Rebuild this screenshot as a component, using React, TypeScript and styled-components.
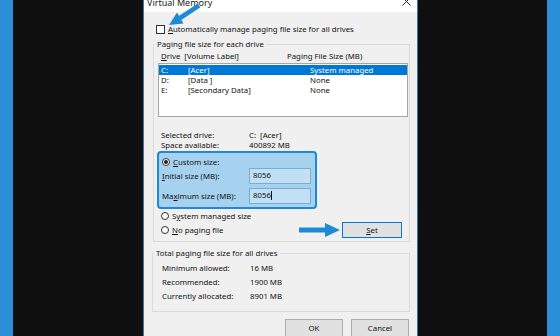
import React from 'react';
import styled, { createGlobalStyle } from 'styled-components';

const Global = createGlobalStyle`
  html, body { margin: 0; padding: 0; background: #0f0f0f; }
  body { width: 560px; height: 336px; overflow: hidden; font-family: "Noto Sans", "Open Sans", sans-serif; }
`;

const Page = styled.div`
  display: flex;
  width: 560px;
  height: 336px;
  overflow: hidden;
  background: #0f0f0f;
`;
const Strip = styled.div`
  width: 13px;
  flex: none;
  background: #2a8fd6;
`;
const Backdrop = styled.div<{ $w: number }>`
  width: ${p => p.$w}px;
  flex: none;
  background: #0f0f0f;
`;
const Dialog = styled.div`
  position: relative;
  width: 275px;
  flex: none;
  display: flex;
  flex-direction: column;
  box-sizing: border-box;
  background: #f0f0f0;
  border-left: 1px solid #3b78a8;
  border-right: 1px solid #3b78a8;
  font-size: 7.8px;
  color: #111;
`;
const TitleBar = styled.div`
  height: 12px;
  flex: none;
  background: #ffffff;
  display: flex;
  justify-content: space-between;
  align-items: flex-start;
  overflow: hidden;
`;
const TitleText = styled.div`
  margin-top: -3px;
  padding-left: 3px;
  font-size: 9px;
  line-height: 12px;
  color: #222;
`;
const CloseIcon = styled.svg`
  margin-top: -3px;
  margin-right: 6px;
`;
const Body = styled.div`
  display: flex;
  flex-direction: column;
  padding: 0 7px 0 9px;
`;
const CheckRow = styled.div`
  display: flex;
  align-items: center;
  gap: 3px;
  height: 10px;
  margin: 12px 0 0 3px;
  line-height: 10px;
`;
const CheckBox = styled.span`
  width: 9px;
  height: 9px;
  box-sizing: border-box;
  border: 1px solid #333;
  background: #fff;
  flex: none;
`;
const Group = styled.fieldset<{ $shift?: number }>`
  margin: ${p => p.$shift ?? 5}px 0 0 ${p => (p.$shift ? -1 : 0)}px;
  padding: ${p => (p.$shift ? '3px 1px 8px 4px' : '2px 1px 3px 4px')};
  border: 1px solid #dadada;
  min-width: 0;
  display: flex;
  flex-direction: column;
`;
const Legend = styled.legend`
  padding: 0 2px;
  margin-left: -3px;
  line-height: 10px;
`;
const HeaderRow = styled.div`
  display: grid;
  grid-template-columns: 126px 1fr;
  padding-left: 3px;
  line-height: 10px;
`;
const ListBox = styled.div`
  margin-top: 2px;
  height: 54px;
  box-sizing: border-box;
  border: 1px solid #a5a5a5;
  background: #fff;
  padding-top: 1px;
`;
const ListRow = styled.div<{ $sel?: boolean }>`
  display: grid;
  grid-template-columns: 27px 122px 1fr;
  padding-left: 2px;
  height: 10px;
  line-height: 10px;
  background: ${p => (p.$sel ? '#0078d7' : 'transparent')};
  color: ${p => (p.$sel ? '#fff' : '#111')};
`;
const InfoRow = styled.div<{ $first?: boolean }>`
  display: grid;
  grid-template-columns: 88px 1fr;
  padding-left: 3px;
  line-height: 10px;
  margin-top: ${p => (p.$first ? 13 : 0)}px;
`;
const Highlight = styled.div`
  margin: 1px 0 0 -1px;
  width: 160px;
  box-sizing: border-box;
  border: 2px solid #1d8ad6;
  border-radius: 4px;
  background: #a7d2ef;
  padding: 4px 4px 3px 3px;
  display: flex;
  flex-direction: column;
`;
const RadioRow = styled.div<{ $mt?: number; $pl?: number }>`
  display: flex;
  align-items: center;
  gap: 3px;
  height: 10px;
  line-height: 10px;
  margin-top: ${p => p.$mt ?? 0}px;
  padding-left: ${p => p.$pl ?? 0}px;
`;
const Radio = styled.span<{ $on?: boolean }>`
  width: 8px;
  height: 8px;
  box-sizing: border-box;
  border: 1px solid #333;
  border-radius: 50%;
  background: #fff;
  flex: none;
  display: flex;
  align-items: center;
  justify-content: center;
  &::after {
    content: '';
    width: 4px;
    height: 4px;
    border-radius: 50%;
    background: ${p => (p.$on ? '#222' : 'transparent')};
  }
`;
const SizeRow = styled.div<{ $mt?: number }>`
  display: flex;
  align-items: center;
  height: 17px;
  margin-top: ${p => p.$mt ?? 0}px;
`;
const SizeLabel = styled.span`
  width: 87px;
  flex: none;
`;
const SizeInput = styled.div`
  width: 62px;
  height: 16px;
  box-sizing: border-box;
  border: 1px solid #7eabcc;
  background: #c0e1f5;
  padding-left: 3px;
  line-height: 13px;
  display: flex;
  align-items: center;
`;
const Caret = styled.span`
  width: 1px;
  height: 9px;
  background: #111;
  display: inline-block;
`;
const ActionRow = styled.div`
  display: flex;
  align-items: center;
  height: 16px;
  margin-top: 1px;
  padding-left: 3px;
  line-height: 10px;
`;
const RadioLabel = styled.span`
  display: flex;
  align-items: center;
  gap: 3px;
`;
const ArrowRight = styled.svg`
  margin-left: auto;
  flex: none;
`;
const Button = styled.div<{ $focus?: boolean; $w?: number; $h?: number }>`
  width: ${p => p.$w ?? 58}px;
  height: ${p => p.$h ?? 20}px;
  flex: none;
  box-sizing: border-box;
  border: 1px solid ${p => (p.$focus ? '#0078d7' : '#adadad')};
  background: #e1e1e1;
  display: flex;
  align-items: center;
  justify-content: center;
  line-height: 10px;
`;
const SetButton = styled(Button)`
  margin: 0 6px 0 2px;
`;
const TotalRow = styled.div`
  display: grid;
  grid-template-columns: 88px 1fr;
  padding-left: 5px;
  line-height: 14px;
`;
const ButtonRow = styled.div`
  display: flex;
  justify-content: flex-end;
  gap: 8px;
  margin-top: 7px;
  padding-right: 1px;
`;
const ButtonText = styled.span`
  margin-top: -3px;
`;
const TopArrow = styled.svg`
  position: absolute;
  left: 19px;
  top: 0;
`;

export default function App() {
  return (
    <>
      <Global />
      <Page>
        <Strip />
        <Backdrop $w={130} />
        <Dialog>
          <TitleBar>
            <TitleText>Virtual Memory</TitleText>
            <CloseIcon width="9" height="9" viewBox="0 0 9 9">
              <path d="M0.5 0.5 L8.5 8.5 M8.5 0.5 L0.5 8.5" stroke="#222" strokeWidth="1" />
            </CloseIcon>
          </TitleBar>
          <Body>
            <CheckRow>
              <CheckBox />
              <span><u>A</u>utomatically manage paging file size for all drives</span>
            </CheckRow>
            <Group>
              <Legend>Paging file size for each drive</Legend>
              <HeaderRow>
                <span><u>D</u>rive&nbsp; [Volume Label]</span>
                <span>Paging File Size (MB)</span>
              </HeaderRow>
              <ListBox>
                <ListRow $sel>
                  <span>C:</span>
                  <span>[Acer]</span>
                  <span>System managed</span>
                </ListRow>
                <ListRow>
                  <span>D:</span>
                  <span>[Data ]</span>
                  <span>None</span>
                </ListRow>
                <ListRow>
                  <span>E:</span>
                  <span>[Secondary Data]</span>
                  <span>None</span>
                </ListRow>
              </ListBox>
              <InfoRow $first>
                <span>Selected drive:</span>
                <span>C:&nbsp; [Acer]</span>
              </InfoRow>
              <InfoRow>
                <span>Space available:</span>
                <span>400892 MB</span>
              </InfoRow>
              <Highlight>
                <RadioRow>
                  <Radio $on />
                  <span><u>C</u>ustom size:</span>
                </RadioRow>
                <SizeRow>
                  <SizeLabel><u>I</u>nitial size (MB):</SizeLabel>
                  <SizeInput>8056</SizeInput>
                </SizeRow>
                <SizeRow $mt={3}>
                  <SizeLabel>Ma<u>x</u>imum size (MB):</SizeLabel>
                  <SizeInput>8056<Caret /></SizeInput>
                </SizeRow>
              </Highlight>
              <RadioRow $mt={2} $pl={3}>
                <Radio />
                <span>S<u>y</u>stem managed size</span>
              </RadioRow>
              <ActionRow>
                <RadioLabel>
                  <Radio />
                  <span><u>N</u>o paging file</span>
                </RadioLabel>
                <ArrowRight width="41" height="14" viewBox="0 0 41 14">
                  <rect x="0" y="4.5" width="27" height="5" fill="#1e8ad3" />
                  <polygon points="26,0 41,7 26,14" fill="#1e8ad3" />
                </ArrowRight>
                <SetButton $focus $w={60} $h={16}>
                  <span><u>S</u>et</span>
                </SetButton>
              </ActionRow>
            </Group>
            <Group $shift={6}>
              <Legend>Total paging file size for all drives</Legend>
              <TotalRow>
                <span>Minimum allowed:</span>
                <span>16 MB</span>
              </TotalRow>
              <TotalRow>
                <span>Recommended:</span>
                <span>1900 MB</span>
              </TotalRow>
              <TotalRow>
                <span>Currently allocated:</span>
                <span>8901 MB</span>
              </TotalRow>
            </Group>
            <ButtonRow>
              <Button><ButtonText>OK</ButtonText></Button>
              <Button><ButtonText>Cancel</ButtonText></Button>
            </ButtonRow>
          </Body>
          <TopArrow width="45" height="30" viewBox="0 0 45 30">
            <line x1="17" y1="18" x2="36" y2="5.5" stroke="#1e8ad3" strokeWidth="4.5" />
            <polygon points="6,25 20.5,23.5 14,12.5" fill="#1e8ad3" />
          </TopArrow>
        </Dialog>
        <Backdrop $w={129} />
        <Strip />
      </Page>
    </>
  );
}
